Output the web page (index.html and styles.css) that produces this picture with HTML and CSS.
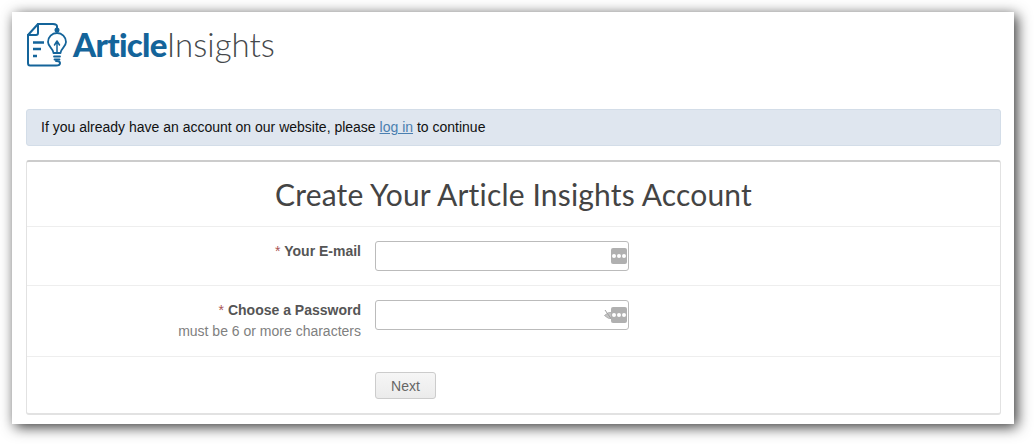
FILE: index.html
```html
<!DOCTYPE html>
<html lang="en">
<head>
    <meta charset="UTF-8">
    <meta name="viewport" content="width=device-width, initial-scale=1.0">
    <title>Create Your Article Insights Account</title>
    <link rel="stylesheet" href="styles.css">
</head>
<body>
    <div class="page">
        <div class="logo">
            <svg class="logo-icon" width="41" height="44" viewBox="0 0 41 44" fill="none" stroke="#14649a" stroke-width="2" stroke-linecap="round" stroke-linejoin="round">
                <path d="M1 12 L11 1 H26 Q30 1 30 3.500 V8"/>
                <circle cx="30" cy="7" r="1.500"/>
                <path d="M11 1 V10 Q11 12 9 12 H1 V40 Q1 42.500 3 42.500 H29 Q33 42.500 33 40 Q33 38 29 38"/>
                <path d="M26.500 30 C26.500 25.500 21 24 21 19 A9 9 0 0 1 39 19 C39 24 33.500 25.500 33.500 30 Z" stroke-width="1.800"/>
                <path d="M27 33.500 H33 M27.500 36.500 H32.500" stroke-width="1.800"/>
                <path d="M27.500 22 L30 18 L32.500 22 M30 18 V29" stroke-width="1.500"/>
                <path d="M6 19.500 H17 M6 26 H14 M6 33 H10" stroke-width="2.600" stroke-linecap="butt"/>
            </svg>
            <div class="logo-text"><b>Article</b>Insights</div>
        </div>

        <div class="notice">
            If you already have an account on our website, please <a href="#">log in</a> to continue
        </div>

        <form class="panel">
            <h1>Create Your Article Insights Account</h1>
            <div class="row row-email">
                <label class="field-label" for="email"><span class="req">*</span> <b>Your E-mail</b></label>
                <div class="input-wrap">
                    <input type="text" id="email">
                    <span class="pw-icon"><i></i><i></i><i></i></span>
                </div>
            </div>
            <div class="row row-password">
                <label class="field-label" for="password">
                    <span class="req">*</span> <b>Choose a Password</b>
                    <small>must be 6 or more characters</small>
                </label>
                <div class="input-wrap">
                    <input type="password" id="password">
                    <svg class="eye-icon" width="10" height="12" viewBox="0 0 10 12" fill="#c4c4c4" stroke="#b0b0b0" stroke-width="1">
                        <path d="M0.500 6.500 Q4 2.500 9 3.500 V9.500 Q4 10.500 0.500 6.500 Z"/>
                        <path d="M1 1 L8 11" stroke="#a0a0a0"/>
                    </svg>
                    <span class="pw-icon"><i></i><i></i><i></i></span>
                </div>
            </div>
            <div class="row row-submit">
                <button type="button">Next</button>
            </div>
        </form>
    </div>
</body>
</html>
```

FILE: styles.css
```css
body {
    font-family: "Liberation Sans", Arial, sans-serif;
    font-size: 14px;
    margin: 0;
    background-color: #fff;
}
.page {
    box-sizing: border-box;
    width: 1002px;
    height: 412px;
    margin: 12px 20px 20px 12px;
    padding: 11px 13px 0 14px;
    background-color: #fff;
    box-shadow: 3px 3px 13px rgba(0,0,0,0.8);
}
.logo {
    display: flex;
    align-items: center;
    height: 44px;
    margin-left: 1px;
    margin-bottom: 42px;
}
.logo-icon {
    flex: none;
}
.logo-text {
    margin-left: 5px;
    font-family: Lato, sans-serif;
    font-size: 33px;
    font-weight: 300;
    font-variant-ligatures: none;
    color: #45484b;
    white-space: nowrap;
    position: relative;
    top: -1px;
}
.logo-text b {
    font-weight: 900;
    color: #14649a;
    letter-spacing: -0.7px;
}
.notice {
    box-sizing: border-box;
    height: 37px;
    padding: 0 14px;
    line-height: 35px;
    color: #111;
    background-color: #dfe6ef;
    border: 1px solid #d3dde8;
    border-radius: 3px;
    margin-bottom: 14px;
}
.notice a {
    color: #4a7fb0;
    text-decoration: underline;
}
.panel {
    box-sizing: border-box;
    height: 255px;
    border: 1px solid #e2e2e2;
    border-top: 2px solid #ccc;
    border-bottom: 2px solid #e2e2e2;
    border-radius: 3px;
}
h1 {
    box-sizing: border-box;
    height: 65px;
    margin: 0;
    font-family: Lato, sans-serif;
    font-size: 30px;
    font-weight: 400;
    font-variant-ligatures: none;
    letter-spacing: 0.17px;
    line-height: 65px;
    text-align: center;
    color: #444;
    border-bottom: 1px solid #eee;
}
.row {
    display: flex;
    gap: 14px;
    padding-top: 14px;
    border-bottom: 1px solid #eee;
}
.row-email {
    height: 59px;
    box-sizing: border-box;
}
.row-password {
    height: 71px;
    box-sizing: border-box;
}
.row-submit {
    height: 56px;
    box-sizing: border-box;
    padding-top: 15px;
    padding-left: 348px;
    border-bottom: none;
}
.field-label {
    box-sizing: border-box;
    width: 334px;
    text-align: right;
    color: #555;
    line-height: 20px;
}
.field-label small {
    display: block;
    font-size: 14px;
    color: #808080;
    margin-top: 1px;
}
.req {
    color: #a55;
}
.input-wrap {
    position: relative;
    width: 254px;
    height: 30px;
}
input {
    box-sizing: border-box;
    display: block;
    width: 100%;
    height: 30px;
    padding: 4px 8px;
    background-color: #fff;
    border: 1px solid #bbb;
    border-radius: 3px;
}
.pw-icon {
    position: absolute;
    top: 7px;
    right: 2px;
    display: flex;
    align-items: center;
    justify-content: center;
    gap: 1px;
    width: 16px;
    height: 16px;
    background-color: #b0b0b0;
    border-radius: 2px;
}
.pw-icon i {
    width: 4px;
    height: 4px;
    background-color: #fff;
    border-radius: 50%;
}
.eye-icon {
    position: absolute;
    top: 9px;
    right: 15px;
}
button {
    box-sizing: border-box;
    width: 61px;
    height: 27px;
    padding: 0;
    font-family: "Liberation Sans", Arial, sans-serif;
    font-size: 14px;
    color: #666;
    background-color: #f0f0f0;
    background-image: linear-gradient(#f6f6f6, #ebebeb);
    border: 1px solid #ccc;
    border-radius: 3px;
    cursor: pointer;
}
```
